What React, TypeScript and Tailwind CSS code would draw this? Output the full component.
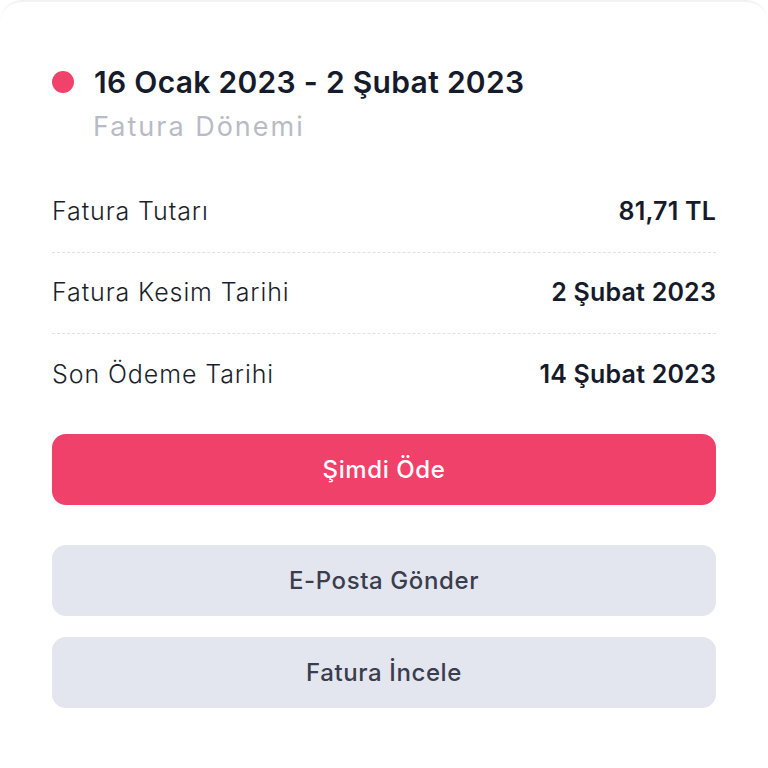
import React from "react";

const rows = [
  { label: "Fatura Tutarı", value: "81,71 TL" },
  { label: "Fatura Kesim Tarihi", value: "2 Şubat 2023" },
  { label: "Son Ödeme Tarihi", value: "14 Şubat 2023" },
];

export default function App() {
  return (
    <div className="min-h-screen w-full bg-white" style={{ fontFamily: "Inter, 'Noto Sans', sans-serif" }}>
      <div className="w-full min-h-[768px] bg-white rounded-t-[22px] border-t-2 border-[#f1f2f4] px-[52px] pt-[62px]">
        <div className="flex items-center gap-[20px]">
          <span className="w-[22px] h-[22px] rounded-full bg-[#f0436c] shrink-0" />
          <h1 className="text-[30px] leading-[36px] font-semibold text-[#161b2b] tracking-[0.3px] whitespace-nowrap">
            16 Ocak 2023 - 2 Şubat 2023
          </h1>
        </div>
        <p className="ml-[41px] mt-[11px] text-[27px] leading-[32px] text-[#b8bbc6] tracking-[2px]">Fatura Dönemi</p>

        <div className="mt-[29px] flex flex-col">
          {rows.map((r, i) => (
            <div
              key={r.label}
              className={
                i < rows.length - 1
                  ? "flex h-[81px] items-center justify-between border-b border-dashed border-[#dfe1e6]"
                  : "flex h-[81px] items-center justify-between"
              }
            >
              <span className="text-[25px] font-light text-[#1b1f2b] tracking-[0.9px]">{r.label}</span>
              <span className="text-[25px] font-semibold text-[#161b2b] tracking-[0.2px]">
                {r.value}
              </span>
            </div>
          ))}
        </div>

        <div className="mt-[19px] flex flex-col">
          <button className="h-[71px] w-full rounded-[14px] bg-[#f0416b] text-white text-[24px] font-medium tracking-[0.6px]">
            Şimdi Öde
          </button>
          <button className="mt-[40px] h-[71px] w-full rounded-[14px] bg-[#e4e6ef] text-[#3a3d4d] text-[24px] font-medium tracking-[0.6px]">
            E-Posta Gönder
          </button>
          <button className="mt-[21px] h-[71px] w-full rounded-[14px] bg-[#e4e6ef] text-[#3a3d4d] text-[24px] font-medium tracking-[0.6px]">
            Fatura İncele
          </button>
        </div>
      </div>
    </div>
  );
}
